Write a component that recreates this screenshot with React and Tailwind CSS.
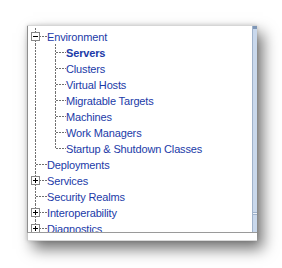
const FONT = { fontFamily: '"Liberation Sans", Arial, sans-serif' }

const HDASH = 'bg-[repeating-linear-gradient(90deg,#707070_0_2px,transparent_2px_3px)]'
const VDASH = 'bg-[repeating-linear-gradient(180deg,#707070_0_2px,transparent_2px_3px)]'

const items = [
  { label: 'Environment', level: 0, toggle: 'minus' },
  { label: 'Servers', level: 1, bold: true },
  { label: 'Clusters', level: 1 },
  { label: 'Virtual Hosts', level: 1 },
  { label: 'Migratable Targets', level: 1 },
  { label: 'Machines', level: 1 },
  { label: 'Work Managers', level: 1 },
  { label: 'Startup & Shutdown Classes', level: 1, last: true },
  { label: 'Deployments', level: 0 },
  { label: 'Services', level: 0, toggle: 'plus' },
  { label: 'Security Realms', level: 0 },
  { label: 'Interoperability', level: 0, toggle: 'plus' },
  { label: 'Diagnostics', level: 0, toggle: 'plus' },
]

function Toggle({ kind }) {
  return (
    <div className="absolute left-[3px] top-[4px] w-[9px] h-[9px] border border-[#878787] bg-white flex items-center justify-center">
      <div className="relative w-[5px] h-[5px]">
        <div className="absolute left-0 top-[2px] w-[5px] h-[1px] bg-black" />
        {kind === 'plus' && <div className="absolute left-[2px] top-0 w-[1px] h-[5px] bg-black" />}
      </div>
    </div>
  )
}

function Row({ item }) {
  return (
    <div className="flex h-[16px]">
      {/* level 0 guide column */}
      <div className="relative w-[19px] shrink-0">
        <div className={`absolute left-[7px] top-0 w-[1px] h-[16px] ${VDASH}`} />
        {item.level === 0 && (
          <>
            <div className={`absolute left-[8px] top-[8px] w-[11px] h-[1px] ${HDASH}`} />
            {item.toggle && <Toggle kind={item.toggle} />}
          </>
        )}
      </div>
      {item.level === 1 && (
        <div className="relative w-[19px] shrink-0">
          <div className={`absolute left-[8px] top-0 w-[1px] ${item.last ? 'h-[9px]' : 'h-[16px]'} ${VDASH}`} />
          <div className={`absolute left-[9px] top-[8px] w-[10px] h-[1px] ${HDASH}`} />
        </div>
      )}
      <span
        className={`pt-[1px] text-[11px] leading-[16px] tracking-[-0.15px] text-[#1b3aa8] whitespace-nowrap ${item.bold ? 'font-bold' : ''}`}
        style={FONT}
      >
        {item.label}
      </span>
    </div>
  )
}

export default function App() {
  return (
    <div className="w-[282px] h-[268px] bg-white overflow-hidden pt-[25px] pl-[27px]">
      <div className="w-[230px] h-[216px] bg-white flex flex-col shadow-[6px_8px_14px_rgba(0,0,0,0.55),0_0_4px_rgba(0,0,0,0.15)]">
        <div className="flex h-[207px] border-t border-[#d6d6d6]">
          {/* tree */}
          <div className="flex-1 border-l border-[#8e8e8e] overflow-hidden pt-[2px]">
            {items.map((it) => (
              <Row key={it.label} item={it} />
            ))}
          </div>
          {/* vertical scrollbar */}
          <div className="w-[5px] flex flex-col border-l border-[#9fb2cb]">
            <div className="h-[3px] bg-[#7e96b6]" />
            <div className="flex-1 bg-[#c9d8ec]" />
            <div className="h-[3px] bg-[#eef3f9] border-t border-b border-[#9fb2cb]" />
            <div className="h-[17px] bg-[#c9d8ec]" />
          </div>
        </div>
        <div className="h-[1px] bg-[#9a9a9a]" />
        <div className="flex-1 bg-white border-l border-[#c8c8c8] border-b border-b-[#d8d8d8]" />
      </div>
    </div>
  )
}
